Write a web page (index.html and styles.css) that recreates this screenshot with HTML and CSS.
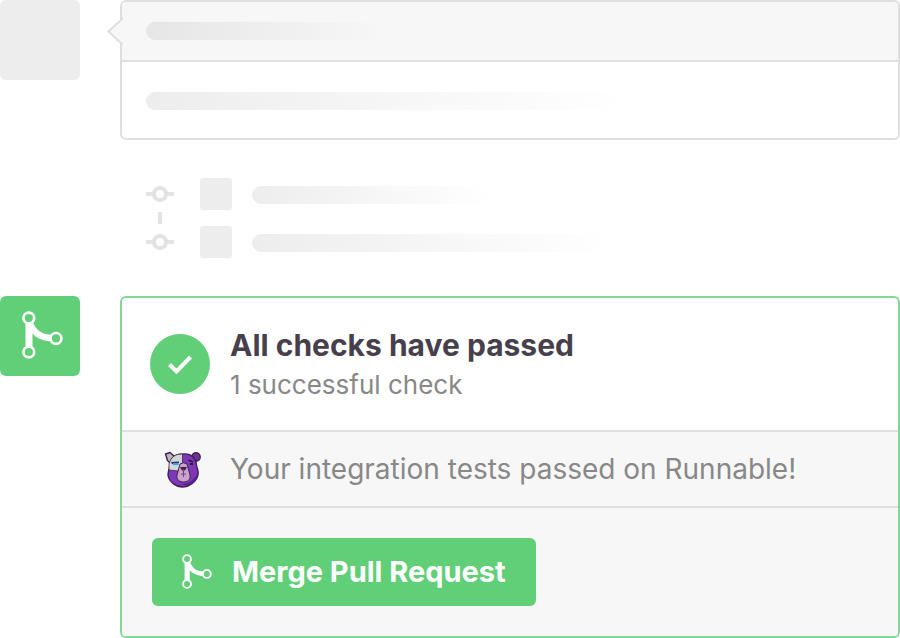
FILE: index.html
```html
<!DOCTYPE html>
<html lang="en">
<head>
<meta charset="utf-8">
<title>Pull request</title>
<link rel="stylesheet" href="styles.css">
</head>
<body>
<svg class="defs" aria-hidden="true">
  <symbol id="merge" viewBox="0 0 41 48">
    <path d="M7 8V40" fill="none" stroke="currentColor" stroke-width="7"/>
    <path d="M7 10C11 21 17 27 30 27" fill="none" stroke="currentColor" stroke-width="6.5"/>
    <g class="merge-node" stroke="currentColor" stroke-width="2.6">
      <circle cx="6.8" cy="7" r="5.4"/>
      <circle cx="6.8" cy="41" r="5.4"/>
      <circle cx="34" cy="27.4" r="5.4"/>
    </g>
  </symbol>
</svg>
<main class="timeline">
  <div class="entry">
    <div class="avatar"></div>
    <section class="card comment">
      <svg class="pointer" viewBox="0 0 16 28" aria-hidden="true">
        <path class="pointer-fill" d="M16 0V28L1.500 14Z"/>
        <path class="pointer-line" d="M15 0V2L1.500 14.500L15 27V28"/>
      </svg>
      <div class="comment-head"><div class="bar bar-dark"></div></div>
      <div class="comment-body"><div class="bar bar-long"></div></div>
    </section>
  </div>
  <div class="commits">
    <svg class="graph" viewBox="0 0 28 80" aria-hidden="true">
      <path d="M0 16H8M20 16H28M14 34V46M0 64H8M20 64H28"/>
      <circle cx="14" cy="16" r="6"/>
      <circle cx="14" cy="64" r="6"/>
    </svg>
    <div class="commit-list">
      <div class="commit"><div class="thumb"></div><div class="bar bar-short"></div></div>
      <div class="commit"><div class="thumb"></div><div class="bar bar-medium"></div></div>
    </div>
  </div>
  <div class="entry">
    <div class="avatar avatar-merge"><svg class="icon-large" aria-hidden="true"><use href="#merge"/></svg></div>
    <section class="card merge">
      <div class="status">
        <svg class="check" viewBox="0 0 60 60" aria-hidden="true">
          <circle cx="30" cy="30" r="30"/>
          <path d="M19.500 30.500L26.500 37.500L40.500 23"/>
        </svg>
        <div class="status-text">
          <h1>All checks have passed</h1>
          <p>1 successful check</p>
        </div>
      </div>
      <div class="result">
        <svg class="bear" viewBox="0 0 40 40" aria-hidden="true">
          <g stroke="#42234f" stroke-width="1.400" stroke-linejoin="round">
            <circle cx="33" cy="8" r="4.200" fill="#6c3299"/>
            <path d="M2.500 5L7 3.500L12 8L7 14L4.500 11.500Z" fill="#b9b8bf"/>
            <path d="M20 5C29 4 33 10 33.500 16C34 20 36 22 35 26C33 33 26 38 20 38C13 38 6 33 5 26C5 22 7 19 7 15C8 8 12 5 20 5Z" fill="#7d37b8"/>
            <path d="M19.500 5V16L15 22L6 21V15C8 8 12 5 19.500 5Z" fill="#d5d5d8" stroke-width=".8"/>
            <path d="M17 15Q20.500 12.500 24 15L27 26C28 31 24 33 20.500 33C17 33 13 31 14 26Z" fill="#c9a3cb" stroke-width="1"/>
          </g>
          <path d="M34 24C32 31 26 35 18 35C27 39 34 33 35 26Z" fill="#58248c"/>
          <path d="M8 13L16 12.500V14L9 15Z" fill="#42234f"/>
          <path d="M10 15H15.500" stroke="#23a9e8" stroke-width="2.200"/>
          <path d="M25.500 11L30 13M27 15H30" stroke="#321640" stroke-width="1.800"/>
          <path d="M17 18H24L22 21.500H19Z" fill="#42234f"/>
          <path d="M20.500 20V28M18 25.500Q20.500 23.500 23 25.500" fill="none" stroke="#704579" stroke-width="1"/>
        </svg>
        <p>Your integration tests passed on Runnable!</p>
      </div>
      <div class="actions">
        <button type="button"><svg class="icon-small" aria-hidden="true"><use href="#merge"/></svg>Merge Pull Request</button>
      </div>
    </section>
  </div>
</main>
</body>
</html>
```
FILE: styles.css
```css
* { box-sizing: border-box; }
body { margin: 0; background: #fff; color: #888; font-family: Inter, "Liberation Sans", sans-serif; font-size: 28px; line-height: 40px; }
h1, p { margin: 0; }
svg { display: block; flex: none; }
.defs { position: absolute; width: 0; height: 0; }
.timeline { display: flex; flex-direction: column; gap: 38px; }
.entry { display: flex; align-items: flex-start; gap: 40px; }
.avatar { display: flex; flex: none; width: 80px; height: 80px; border-radius: 6px; background: #ededed; }
.avatar-merge { padding: 15px 0 0 22px; background: #61cf78; color: #fff; }
.card { position: relative; flex: 1; min-width: 0; border: 2px solid #dfdfdf; border-radius: 6px; }
.pointer { position: absolute; left: -15px; top: 15px; width: 16px; height: 28px; }
.pointer-fill { fill: #f7f7f7; }
.pointer-line { fill: none; stroke: #dfdfdf; stroke-width: 2; }
.comment-head { padding: 20px 24px; border-bottom: 2px solid #dfdfdf; border-radius: 4px 4px 0 0; background: #f7f7f7; }
.comment-body { padding: 30px 24px 28px; }
.bar { height: 18px; border-radius: 9px; background: linear-gradient(to right, #ededed, #ededed00); }
.bar-dark { width: 240px; background: linear-gradient(to right, #e6e6e6, #e6e6e600); }
.bar-long { width: 480px; }
.bar-short { width: 240px; }
.bar-medium { width: 360px; }
.commits { display: flex; gap: 26px; padding-left: 146px; }
.graph { width: 28px; height: 80px; fill: none; stroke: #e3e3e3; stroke-width: 4; }
.commit-list { display: flex; flex-direction: column; gap: 16px; }
.commit { display: flex; align-items: center; gap: 20px; }
.commit .bar { margin-top: 2px; }
.thumb { width: 32px; height: 32px; border-radius: 3px; background: #ededed; }
.merge { border-color: #82d994; }
.merge-node { fill: #61cf78; }
.icon-large { width: 41px; height: 48px; }
.icon-small { width: 30px; height: 35px; margin-bottom: 2px; }
.status { display: flex; align-items: center; gap: 20px; padding: 25px 28px; }
.status-text { padding-top: 2px; }
.check { width: 60px; height: 60px; fill: #61cf78; }
.check path { fill: none; stroke: #fff; stroke-width: 4; }
h1 { color: #473f4b; font-size: 30px; font-weight: 700; line-height: 40px; }
.status p { font-size: 26px; }
.result { display: flex; align-items: center; gap: 27px; padding: 17px 41px; border-top: 2px solid #dfdfdf; border-bottom: 2px solid #dfdfdf; background: #f7f7f7; }
.bear { width: 40px; height: 40px; }
.actions { padding: 30px; border-radius: 0 0 4px 4px; background: #f7f7f7; }
button { display: flex; align-items: center; gap: 20px; padding: 14px 30px; border: 0; border-radius: 6px; background: #61cf78; color: #fff; font: inherit; font-size: 29px; font-weight: 700; }
```
